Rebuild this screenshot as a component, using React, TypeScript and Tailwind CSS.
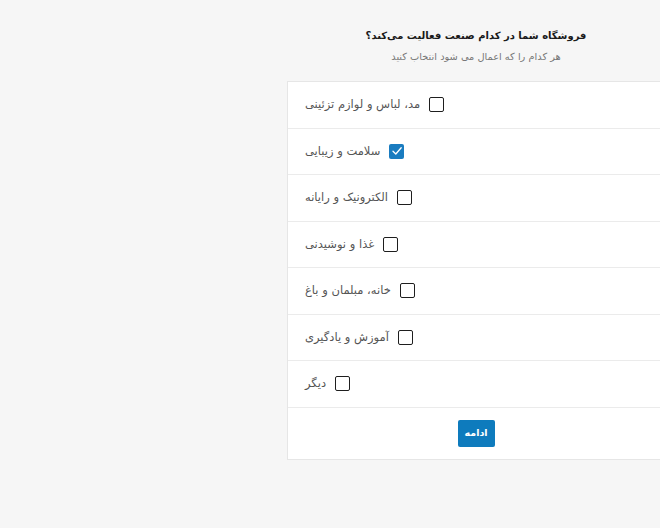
import React from "react";

const items = [
  { label: "مد، لباس و لوازم تزئینی", checked: false },
  { label: "سلامت و زیبایی", checked: true },
  { label: "الکترونیک و رایانه", checked: false },
  { label: "غذا و نوشیدنی", checked: false },
  { label: "خانه، مبلمان و باغ", checked: false },
  { label: "آموزش و یادگیری", checked: false },
  { label: "دیگر", checked: false },
];

function Box({ checked }: { checked: boolean }) {
  if (checked) {
    return (
      <span className="flex h-[15px] w-[15px] items-center justify-center rounded-[2px] bg-[#1a7cc0]">
        <svg width="12" height="12" viewBox="0 0 12 12" fill="none">
          <path d="M2 6.3 L4.8 9 L10.2 2.8" stroke="#fff" strokeWidth="1.3" strokeLinecap="round" strokeLinejoin="round" />
        </svg>
      </span>
    );
  }
  return <span className="block h-[15px] w-[15px] rounded-[2px] border-[1.5px] border-[#1e1e1e] bg-white" />;
}

export default function App() {
  return (
    <div className="min-h-screen w-full overflow-hidden bg-[#f6f6f6]" style={{ fontFamily: '"DejaVu Sans", sans-serif' }}>
      <div className="flex w-[952px] flex-col items-center pt-[28px]">
        <h1 dir="rtl" className="text-[10px] font-bold leading-[16px] text-[#1a1a1a]">
          فروشگاه شما در کدام صنعت فعالیت می‌کند؟
        </h1>
        <p dir="rtl" className="mt-[6px] text-[9.8px] leading-[14px] text-[#777]">
          هر کدام را که اعمال می شود انتخاب کنید
        </p>
        <div className="mt-[17px] w-[378px] border border-[#e6e6e6] bg-white">
          {items.map((it) => (
            <div key={it.label} className="flex h-[46.5px] items-center border-b border-[#ebebeb] px-[17px]">
              <span dir="rtl" className="text-[11.5px] text-[#555]">
                {it.label}
              </span>
              <span className="ml-[9px]">
                <Box checked={it.checked} />
              </span>
            </div>
          ))}
          <div className="flex h-[51px] items-center justify-center">
            <button className="h-[27px] w-[37px] rounded-[2px] bg-[#0e7bbd] text-[9.5px] font-bold text-white">
              ادامه
            </button>
          </div>
        </div>
      </div>
    </div>
  );
}
